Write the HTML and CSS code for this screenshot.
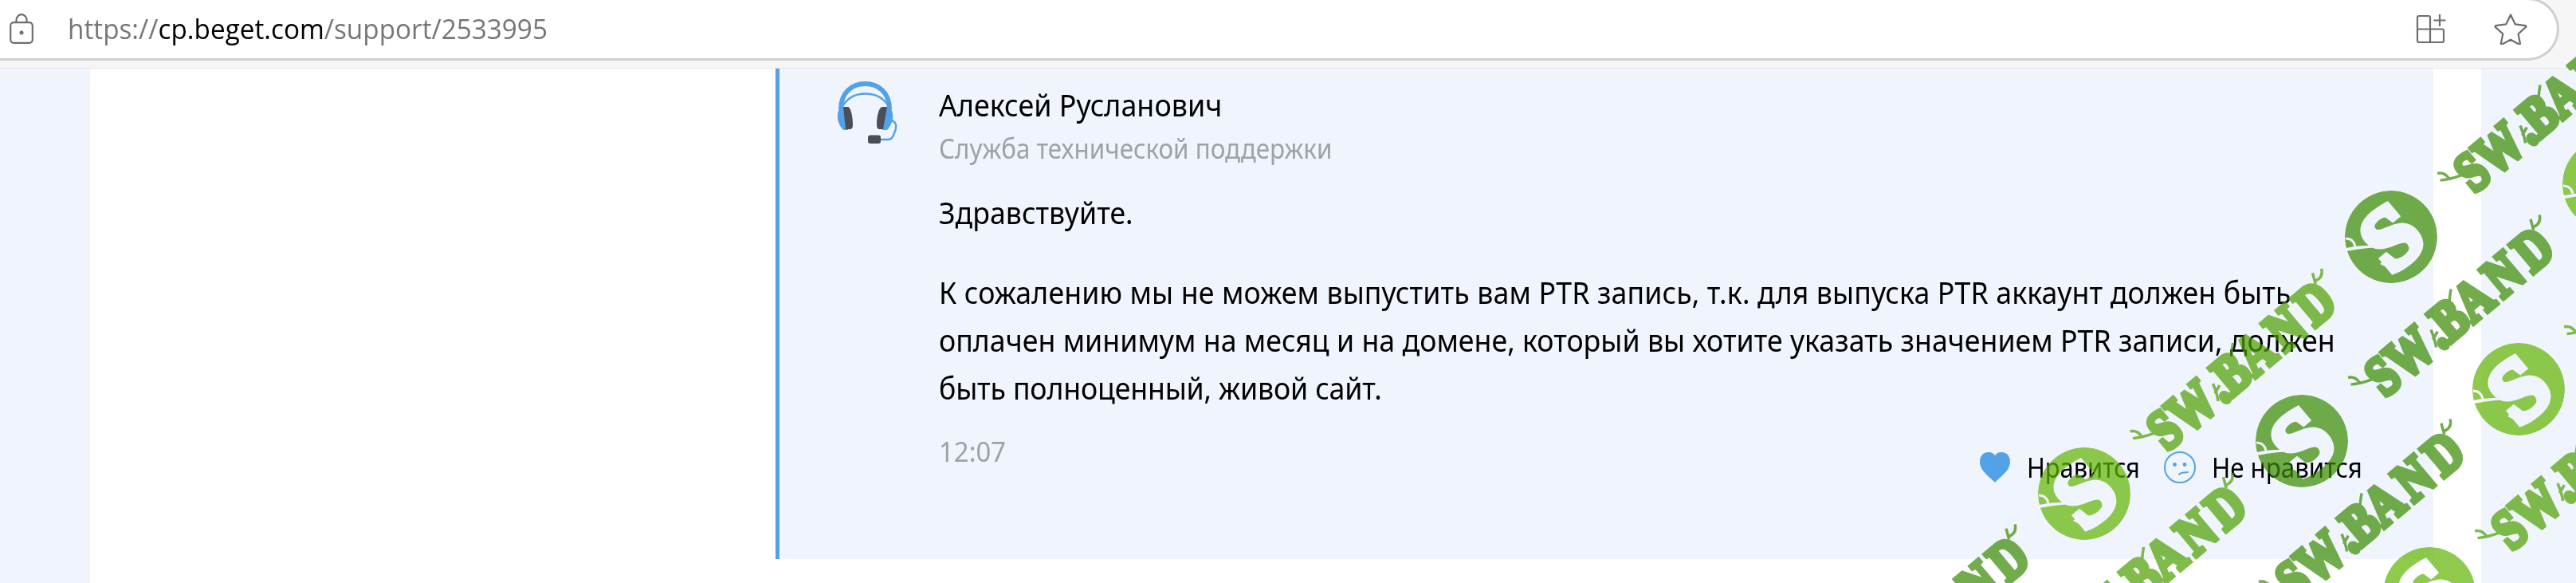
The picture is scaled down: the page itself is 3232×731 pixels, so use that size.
FILE: index.html
```
<!DOCTYPE html>
<html lang="ru">
	<head>
		<meta charset="UTF-8">
		<meta name="viewport" content="width=device-width, initial-scale=1.0">
		<title>Служба технической поддержки</title>
		<link rel="stylesheet" href="styles.css">
	</head>
	<body>
		<div class="toolbar">
			<div class="address">
				<svg class="lock" viewBox="0 0 30 38" width="30" height="38">
					<rect x="1.2" y="11.2" width="27.6" height="25.6" rx="4"/>
					<path d="M8.5 11V8a6.5 6.8 0 0 1 13 0v3"/>
					<circle class="dot" cx="15" cy="24" r="2.5"/>
				</svg>
				<div class="url">https://<b>cp.beget.com</b>/support/2533995</div>
				<svg class="apps" viewBox="0 0 38 38" width="38" height="38">
					<path d="M4 3h12a2 2 0 0 1 2 2v31H4a2 2 0 0 1-2-2V5a2 2 0 0 1 2-2zM2 19.500h31a2 2 0 0 1 2 2V34a2 2 0 0 1-2 2H18M30 1v15M22.500 8.500h15"/>
				</svg>
				<svg class="star" viewBox="0 0 42 40" width="42" height="40">
					<path d="M21 2.500l5.600 11.800 13 1.900a1 1 0 0 1 .5 1.700l-9.500 8.600 2.300 12a1 1 0 0 1-1.500 1L21 33.700l-10.700 5.800a1 1 0 0 1-1.500-1l2.500-12-9.500-8.600a1 1 0 0 1 .6-1.700l13-1.900z"/>
				</svg>
			</div>
		</div>
		<div class="page">
			<div class="content">
				<div class="message">
					<svg class="headset" viewBox="0 0 78 80" width="78" height="80">
						<path class="band" d="M6 36C6 15 20 4 36.500 4S67 15 67 36"/>
						<path class="wire" d="M7 34C14 21 24 16.500 36.500 16.500S60 21 67 34"/>
						<path class="blue" d="M5 34h10v28H9C2 55-1 43 5 34zM68 34H58v28h6c7-7 10-19 4-28z"/>
						<path class="dark" d="M9 33h6c3 0 6 11 6 22 0 4-1 6-4 6h-5zM64 33h-6c-4 0-7 11-7 22 0 4 1 6 4 6h4z"/>
						<path class="wire" d="M70 50c7 3 6 9 3 16-3 8-5 8-9 8H53"/>
						<rect class="dark" x="40" y="68.500" width="16" height="10.500" rx="3"/>
					</svg>
					<div class="body">
						<div class="name">Алексей Русланович</div>
						<div class="role">Служба технической поддержки</div>
						<p class="greeting">Здравствуйте.</p>
						<p class="text">
							<span class="wide">К сожалению мы не можем выпустить вам PTR запись, т.к. для выпуска PTR аккаунт должен быть</span><br>
							оплачен минимум на месяц и на домене, который вы хотите указать значением PTR записи, должен<br>
							<span class="narrow">быть полноценный, живой сайт.</span>
						</p>
						<div class="bottom">
							<div class="time">12:07</div>
							<div class="actions">
								<svg class="heart" viewBox="0 0 38 38" width="38" height="38">
									<path d="M19 38C14 32 0 24 0 12 0 4 5 0 10.500 0 15 0 18 2 19 4.500 20 2 23 0 27.500 0 33 0 38 4 38 12 38 24 24 32 19 38z"/>
								</svg>
								<span class="like">Нравится</span>
								<svg class="face" viewBox="0 0 40 40" width="40" height="40">
									<circle cx="20" cy="20" r="19"/>
									<path d="M19 29c2-3 6-2 11-3"/>
									<circle class="eye" cx="13.500" cy="16.500" r="2.400"/>
									<circle class="eye" cx="26" cy="16.500" r="2.400"/>
								</svg>
								<span class="dislike">Не нравится</span>
							</div>
						</div>
					</div>
				</div>
			</div>
		</div>

		<svg class="watermark" viewBox="0 0 3232 731" width="3232" height="731">
			<defs>
				<mask id="cut" maskUnits="userSpaceOnUse" x="-60" y="-60" width="120" height="120">
					<circle r="58" fill="#fff"/>
					<g transform="rotate(-40)">
						<text class="letter" x="-31" y="37" textLength="62" lengthAdjust="spacingAndGlyphs">S</text>
					</g>
					<path d="M-56 14Q-38 10-14 11L10-2-8 13Q-30 13-56 18zM-14 34L-2 24 6 30-6 38z"/>
					<path class="line" d="M-57 2Q-47 2-45 12"/>
				</mask>
				<g id="logo">
					<circle r="58" mask="url(#cut)"/>
				</g>
				<g id="word" transform="rotate(-40)">
					<text transform="scale(.8 1)" x="5 45 121 138 185 246 307" y="-3">SW.BAND</text>
					<path d="M-18-43Q-8-36 6-31M-15-52Q-7-48-8-38M103-31Q99-18 94-10M108-24L97-20M155-54Q148-48 142-42M282-44L288-57M285-47Q295-44 300-54"/>
				</g>
			</defs>
			<use class="green" href="#word" transform="translate(3103 247.500)"/>
			<use class="green" href="#word" transform="translate(2991 503.500)"/>
			<use class="green" href="#word" transform="translate(2879 759.500)"/>
			<use class="green" href="#word" transform="translate(2333 891.500)"/>
			<use class="mid" href="#word" transform="translate(2717.500 571)"/>
			<use class="mid" href="#word" transform="translate(2605.500 827)"/>
			<use class="mid" href="#word" transform="translate(3150 696)"/>
			<use class="mid" href="#word" transform="translate(3262 440)"/>
			<use class="green" href="#logo" transform="translate(3000 297)"/>
			<use class="green" href="#logo" transform="translate(2888 553)"/>
			<use class="lime" href="#logo" transform="translate(3273 231)"/>
			<use class="lime" href="#logo" transform="translate(3160 488)"/>
			<use class="lime" href="#logo" transform="translate(3048 744)"/>
			<use class="lime" href="#logo" transform="translate(2615 619)"/>
		</svg>
	</body>
</html>
```
FILE: styles.css
```
:root{
	--page-bg:#f0f4fc;
	--blue:#53a2e8;
	--grey-text:#9fa1a6;
	--icon:#6e6e6e;
}
*{
	box-sizing:border-box;
}
body{
	margin:0;
	height:731px;
	overflow:hidden;
	position:relative;
	background-color:var(--page-bg);
	font-family:"Noto Sans", "Open Sans", sans-serif;
	color:#000;
}
svg{
	display:block;
	flex:none;
	fill:none;
}

/* browser bar */
.toolbar{
	height:86px;
	background-color:#f6f6f6;
	border-bottom:1px solid #e6e6e6;
	overflow:hidden;
}
.address{
	display:flex;
	align-items:center;
	width:3211px;
	height:79px;
	margin-top:-3px;
	padding:0 37px 2px 12px;
	background-color:#fff;
	border:3px solid #cfcfcf;
	border-left:0;
	border-radius:0 40px 40px 0;
}
.lock, .apps, .star{
	stroke:var(--icon);
	stroke-width:2.2;
	stroke-linejoin:round;
}
.lock .dot{
	fill:var(--icon);
	stroke:none;
}
.url{
	flex:1;
	margin-left:43px;
	font-family:"Open Sans", sans-serif;
	font-size:35px;
	line-height:48px;
	color:#767676;
	white-space:nowrap;
	transform:scaleX(.951);
	transform-origin:left;
}
.url b{
	font-weight:normal;
	color:#000;
}
.star{
	margin-left:60px;
}

/* ticket */
.page{
	padding:0 119px 0 113px;
}
.content{
	height:645px;
	padding:0 60px 0 860px;
	background-color:#fff;
}
.message{
	display:flex;
	height:615px;
	padding:15px 90px 0 71px;
	background-color:var(--page-bg);
	border-left:5px solid var(--blue);
}
.headset .band{
	stroke:var(--blue);
	stroke-width:6;
}
.headset .wire{
	stroke:var(--blue);
	stroke-width:2.500;
}
.headset .blue{
	fill:var(--blue);
}
.headset .dark{
	fill:#4a4d5a;
}
.body{
	flex:1;
	min-width:0;
	margin-left:51px;
	white-space:nowrap;
}
.name, .role, .greeting, .text, .time, .like, .dislike{
	transform-origin:left;
}
.name{
	font-size:39px;
	line-height:60px;
	transform:scaleX(.92);
}
.role{
	font-size:35px;
	line-height:50px;
	color:var(--grey-text);
	transform:scaleX(.896);
}
.greeting{
	margin:25px 0 40px;
	font-size:39px;
	line-height:60px;
	transform:scaleX(.915);
}
.text{
	margin:0;
	font-size:39px;
	line-height:60px;
	transform:scaleX(.916);
}
.text .wide{
	letter-spacing:.12px;
}
.text .narrow{
	letter-spacing:-.2px;
}
.bottom{
	display:flex;
	justify-content:space-between;
	margin-top:20px;
}
.time{
	font-size:35px;
	line-height:60px;
	color:var(--grey-text);
	transform:scaleX(.94);
}
.actions{
	display:flex;
	align-items:center;
	height:60px;
	margin-top:20px;
	font-size:34px;
}
.heart{
	fill:var(--blue);
}
.face{
	stroke:var(--blue);
	stroke-width:2;
	stroke-linecap:round;
}
.face .eye{
	fill:var(--blue);
	stroke:none;
}
.like{
	width:172px;
	margin-left:21px;
	transform:scaleX(.905);
}
.dislike{
	width:188px;
	margin-left:20px;
	transform:scaleX(.92);
}

/* watermark over the page */
.watermark{
	position:absolute;
	top:0;
	left:0;
	pointer-events:none;
	font-family:"Liberation Serif", serif;
	font-weight:bold;
}
.watermark use{
	opacity:.7;
}
.watermark #word{
	font-size:70px;
}
.watermark #word text{
	stroke-width:7;
}
.watermark #word path{
	fill:none;
	stroke-width:3.500;
}
.watermark #logo{
	stroke:none;
}
.watermark .letter{
	font-size:110px;
	fill:#000;
	stroke:#000;
	stroke-width:9;
}
.watermark mask path{
	fill:#000;
}
.watermark mask .line{
	fill:none;
	stroke:#000;
	stroke-width:3;
}
.green{
	fill:#388b00;
	stroke:#388b00;
}
.mid{
	fill:#4ca000;
	stroke:#4ca000;
}
.lime{
	fill:#5fb500;
	stroke:#5fb500;
}
```
